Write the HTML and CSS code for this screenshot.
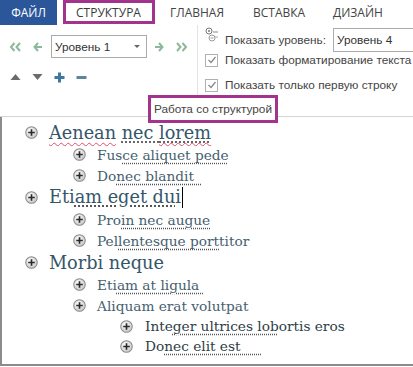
FILE: index.html
```html
<!DOCTYPE html>
<html>
<head>
<meta charset="utf-8">
<link rel="stylesheet" href="styles.css">
</head>
<body>
<div class="app">
  <div class="tabs">
    <div class="tab file">ФАЙЛ</div>
    <div class="tab active">СТРУКТУРА<span class="hl hl-tab"></span></div>
    <div class="tab t-home">ГЛАВНАЯ</div>
    <div class="tab t-ins">ВСТАВКА</div>
    <div class="tab t-des">ДИЗАЙН</div>
  </div>
  <div class="ribbon">
    <div class="group-tools">
      <div class="tool-row">
        <svg class="ico i1" width="13" height="12" viewBox="0 0 13 12"><path d="M5.5 2 L2 6 L5.5 10 M11 2 L7.5 6 L11 10" fill="none" stroke="#8db99a" stroke-width="2"/></svg>
        <svg class="ico i2" width="10" height="12" viewBox="0 0 10 12"><path d="M5 2 L1.5 6 L5 10 M1.5 6 H9" fill="none" stroke="#8db99a" stroke-width="2"/></svg>
        <div class="select sel1"><span>Уровень 1</span><span class="caret"></span></div>
        <svg class="ico i3" width="10" height="12" viewBox="0 0 10 12"><path d="M5 2 L8.5 6 L5 10 M1 6 H8.5" fill="none" stroke="#8db99a" stroke-width="2"/></svg>
        <svg class="ico i4" width="14" height="12" viewBox="0 0 14 12"><path d="M2 2 L5.5 6 L2 10 M7.5 2 L11 6 L7.5 10" fill="none" stroke="#8db99a" stroke-width="2"/></svg>
      </div>
      <div class="tool-row row2">
        <svg width="11" height="10" viewBox="0 0 11 10"><path d="M0.5 8 L5.5 2 L10.5 8 Z" fill="#6b6b6b"/></svg>
        <svg width="11" height="10" viewBox="0 0 11 10"><path d="M0.5 2 L5.5 8 L10.5 2 Z" fill="#6b6b6b"/></svg>
        <svg width="11" height="11" viewBox="0 0 11 11"><path d="M5.5 0.5 V10.5 M0.5 5.5 H10.5" stroke="#3c78a0" stroke-width="3"/></svg>
        <svg width="11" height="11" viewBox="0 0 11 11"><path d="M0.5 5.5 H10.5" stroke="#5d8799" stroke-width="3"/></svg>
      </div>
    </div>
    <div class="group-show">
      <div class="show-row first">
        <svg class="lvl-ico" width="14" height="18" viewBox="0 0 14 18"><circle cx="4" cy="4" r="3" fill="none" stroke="#777" stroke-width="1"/><circle cx="4" cy="4" r="1" fill="#777"/><path d="M8 5 H13" stroke="#888"/><circle cx="7" cy="11" r="3" fill="none" stroke="#9a9a9a" stroke-width="1"/><path d="M5.5 11 H8.5" stroke="#9a9a9a"/><path d="M10 10 H13" stroke="#aaa"/></svg>
        <span class="lbl">Показать уровень:</span>
        <div class="select sel4"><span>Уровень 4</span></div>
      </div>
      <div class="show-row chk-row r2">
        <span class="chk"><svg width="10" height="10" viewBox="0 0 10 10"><path d="M1.5 5 L4 7.5 L8.5 2" fill="none" stroke="#888" stroke-width="1.2"/></svg></span>
        <span class="lbl">Показать форматирование текста</span>
      </div>
      <div class="show-row chk-row r3">
        <span class="chk"><svg width="10" height="10" viewBox="0 0 10 10"><path d="M1.5 5 L4 7.5 L8.5 2" fill="none" stroke="#888" stroke-width="1.2"/></svg></span>
        <span class="lbl">Показать только первую строку</span>
      </div>
    </div>
    <div class="group-label">Работа со структурой</div>
  </div>
  <div class="doc">
    <div class="item l1 first"><svg class="pl" viewBox="0 0 14 14"><use href="#plus"/></svg><span class="t"><span class="sp">Aenean</span> <span class="dot">nec <span class="sp">lorem</span></span></span></div>
    <div class="item l2"><svg class="pl" viewBox="0 0 14 14"><use href="#plus"/></svg><span class="t">Fus<span class="dot">ce aliquet pede</span></span></div>
    <div class="item l2"><svg class="pl" viewBox="0 0 14 14"><use href="#plus"/></svg><span class="t">Do<span class="dot">nec blandit&nbsp;&nbsp;</span></span></div>
    <div class="item l1"><svg class="pl" viewBox="0 0 14 14"><use href="#plus"/></svg><span class="t">Eti<span class="dot">am eget du</span>i<span class="caret-bar"></span></span></div>
    <div class="item l2"><svg class="pl" viewBox="0 0 14 14"><use href="#plus"/></svg><span class="t">Pro<span class="dot">in nec augue</span></span></div>
    <div class="item l2"><svg class="pl" viewBox="0 0 14 14"><use href="#plus"/></svg><span class="t">Pel<span class="dot">lentesque port</span>titor</span></div>
    <div class="item l1"><svg class="pl" viewBox="0 0 14 14"><use href="#plus"/></svg><span class="t">Morbi neque</span></div>
    <div class="item l2"><svg class="pl" viewBox="0 0 14 14"><use href="#plus"/></svg><span class="t">Eti<span class="dot">am at ligula&nbsp;</span></span></div>
    <div class="item l2"><svg class="pl" viewBox="0 0 14 14"><use href="#plus"/></svg><span class="t">Aliquam erat volutpat</span></div>
    <div class="item l3"><svg class="pl" viewBox="0 0 14 14"><use href="#plus"/></svg><span class="t">Inte<span class="dot">ger ultrices lob</span>ortis eros</span></div>
    <div class="item l3"><svg class="pl" viewBox="0 0 14 14"><use href="#plus"/></svg><span class="t">Do<span class="dot">nec elit est&nbsp;&nbsp;&nbsp;&nbsp;&nbsp;</span></span></div>
  </div>
</div>
<svg width="0" height="0" class="defs">
  <defs>
    <radialGradient id="pg" cx="40%" cy="35%" r="70%">
      <stop offset="0" stop-color="#ffffff"/>
      <stop offset="1" stop-color="#c4c4c4"/>
    </radialGradient>
    <g id="plus">
      <circle cx="7" cy="7" r="6.2" fill="url(#pg)" stroke="#8a8a8a" stroke-width="1.1"/>
      <path d="M7 3.5 V10.5 M3.5 7 H10.5" stroke="#2a2a2a" stroke-width="1.8"/>
    </g>
  </defs>
</svg>
</body>
</html>
```
FILE: styles.css
```css
* { box-sizing: border-box; }
html, body { margin: 0; padding: 0; background: #fff; }
body { width: 413px; height: 367px; overflow: hidden; font-family: "Liberation Sans", Arial, sans-serif; color: #444; }
.app { position: relative; width: 413px; height: 367px; }
.defs { position: absolute; }

.tabs { display: flex; height: 25px; align-items: stretch; font-family: "Open Sans", sans-serif; font-size: 12px; }
.tab { position: relative; display: flex; align-items: center; color: #444; flex: none; }
.tab.file { background: #2b579a; color: #fff; width: 57px; justify-content: center; }
.tab.active { width: 113px; padding-left: 19px; color: #3a3a3a; }
.t-home { width: 83px; }
.t-ins { width: 80px; }
.t-des { flex: 1; }
.hl { position: absolute; border: 3px solid #a3348e; pointer-events: none; }
.hl-tab { left: 6px; width: 92px; top: 0; bottom: 1px; }

.ribbon { position: relative; display: flex; height: 92px; border-bottom: 1px solid #d4d4d4; }
.group-tools { flex: none; width: 198px; border-right: 1px solid #e4e4e4; padding: 10px 0 0 9px; margin-bottom: 6px; }
.tool-row { display: flex; align-items: center; height: 23px; }
.i1 { margin-right: 11px; }
.i2 { margin-right: 8px; }
.i3 { margin-right: 11px; }
.select { border: 1px solid #ababab; height: 23px; display: flex; align-items: center; padding-left: 3px; font-size: 11.8px; color: #333; background: #fff; flex: none; }
.sel1 { width: 96px; justify-content: space-between; padding-right: 6px; margin-right: 7px; }
.caret { width: 0; height: 0; border-left: 3px solid transparent; border-right: 3px solid transparent; border-top: 3px solid #666; }
.row2 { margin-top: 13px; height: 12px; gap: 11px; padding-left: 1px; }

.group-show { padding: 3px 0 0 7px; flex: 1; min-width: 0; overflow: hidden; }
.show-row { display: flex; align-items: center; font-size: 11.8px; color: #444; white-space: nowrap; }
.show-row.first { height: 24px; }
.lvl-ico { margin-right: 6px; margin-top: -8px; flex: none; }
.sel4 { margin-left: 7px; width: 90px; height: 24px; }
.chk-row { height: 16px; }
.r3 { margin-top: 9px; }
.chk { width: 13px; height: 13px; border: 1px solid #b0b0b0; display: flex; align-items: center; justify-content: center; margin-right: 7px; background: #fff; flex: none; }
.group-label { position: absolute; left: 148px; top: 70px; width: 130px; height: 28px; border: 3px solid #a3348e; font-size: 11.8px; color: #444; display: flex; align-items: center; justify-content: center; background: #fff; z-index: 2; white-space: nowrap; }

.doc { height: 249px; border-left: 2px solid #8c8c8c; border-bottom: 2px solid #8c8c8c; padding-top: 4px; font-family: "DejaVu Serif", serif; color: #46606e; }
.item { display: flex; align-items: center; white-space: nowrap; }
.pl { width: 13px; height: 13px; flex: none; }
.l1 { padding-left: 23px; font-size: 17.7px; height: 23px; color: #34566a; }
.l1 .pl { margin-right: 11px; }
.l2 { padding-left: 71px; font-size: 13.7px; height: 21px; }
.l2 .pl { margin-right: 11px; }
.l3 { padding-left: 118px; font-size: 13.7px; height: 20px; color: #2e3e46; }
.l3 .pl { margin-right: 12px; }
.dot { text-decoration: underline dotted #555; text-underline-offset: 3px; }
.sp { text-decoration: underline wavy #e0506e; text-decoration-thickness: 1px; text-underline-offset: 3px; }
.caret-bar { display: inline-block; width: 1px; height: 21px; background: #000; vertical-align: middle; margin-left: 1px; }
```
